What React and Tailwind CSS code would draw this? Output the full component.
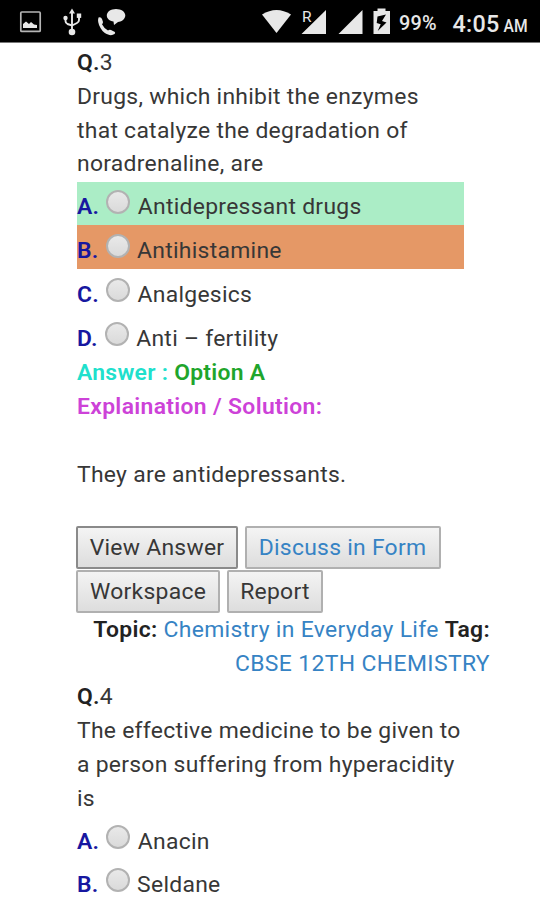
const INK = 'text-[#373737]'

function Line({ children, className = '' }) {
  return <div className={`h-[33.75px] leading-[33.75px] whitespace-pre ${className}`}>{children}</div>
}

function Option({ letter, label, className = '' }) {
  return (
    <div className={`flex h-[43.8px] w-[387px] pt-[8.5px] leading-[34.75px] whitespace-pre ${className}`}>
      <b className="font-semibold text-[#1717a0]">{letter}.</b>
      <span className="ml-[7px] h-[24px] w-[24px] shrink-0 rounded-full border-2 border-[#b2b2b2] bg-linear-to-b from-[#e9e9e9] to-[#dadada]" />
      <span className="ml-[7.5px]">{label}</span>
    </div>
  )
}

function Button({ children, className = '' }) {
  return (
    <button className={`flex h-[43px] shrink-0 justify-center rounded-[2px] border-2 bg-linear-to-b from-[#f4f4f4] to-[#dddddd] leading-[39.5px] whitespace-nowrap ${className}`}>
      {children}
    </button>
  )
}

function StatusBar() {
  return (
    <header className="h-[43px] bg-black border-b border-[#777]">
      <svg width="540" height="42" viewBox="0 0 540 42" fill="#e8e8e8" fontFamily="Roboto, sans-serif">
        <rect x="20.8" y="12" width="19.4" height="19.4" rx="1" fill="none" stroke="#b5b5b5" strokeWidth="1.7" />
        <path d="M23 28v-4l3-2.500 3 2.500 2-2 3 2.500 3 .5v3z" />
        <g fill="none" stroke="#e8e8e8" strokeWidth="1.9">
          <path d="M72 12v20M65.500 18v3q0 2 2 3l4.500 1.500 5-2.500q2-1 2-3v-4" />
        </g>
        <path d="M72 8.500l3 5h-6z" />
        <circle cx="72" cy="32" r="3.300" />
        <circle cx="65.500" cy="18" r="2.200" />
        <rect x="76.800" y="13.500" width="4.400" height="4.400" />
        <path d="M98.500 17.500q2.500-1 3.500 1.500l1 3q0 1.300-1 2.300 2 4.200 6 6.200 1.500-1.300 3-.5l3 1.500q2 1 .5 2.500-2 1.500-5 1-6-1.500-9-7-3.500-6-2-10.500z" />
        <path d="M116 9c5.200 0 9.300 2.800 9.300 6.500S121 22 118 22l-4 3-.5-3.400c-4-.8-6.700-3-6.700-6.100 0-3.700 4-6.500 9.200-6.500z" />
        <path d="M262 14.500q14.500-9 29 0L276.500 33z" />
        <path d="M326 10v24h-24.500zM362.500 10v24h-24z" />
        <text x="302" y="21.500" fontSize="15.500" stroke="#000" strokeWidth="1.500" paintOrder="stroke">R</text>
        <path d="M373.500 11h4V8.500h8V11h4.500v23h-16.500z" />
        <path d="M386 14.500l-8.500 2-.8 6.500 4 1.200-3 6.800 8.800-8.500-4.500-1.500z" fill="#000" />
        <text x="399" y="30" fontSize="20.500" fontWeight="500" textLength="38" lengthAdjust="spacingAndGlyphs">99%</text>
        <text x="452.500" y="31.500" fontSize="24.500" fontWeight="500" textLength="47" lengthAdjust="spacingAndGlyphs">4:05</text>
        <text x="503.500" y="31.500" fontSize="18" fontWeight="500" textLength="24.500" lengthAdjust="spacingAndGlyphs">AM</text>
      </svg>
    </header>
  )
}

export default function App() {
  return (
    <div className={`h-[900px] w-[540px] overflow-hidden bg-white font-[Roboto,sans-serif] text-[22.9px] tracking-[0.28px] ${INK}`}>
      <StatusBar />
      <main className="ml-[77px] w-[413px] pt-[3.1px]">
        <Line><b className="font-semibold text-[#222]">Q.</b>3</Line>
        <Line>Drugs, which inhibit the enzymes</Line>
        <Line>that catalyze the degradation of</Line>
        <Line>noradrenaline, are</Line>
        <div className="mt-[0.6px]">
          <Option letter="A" label="Antidepressant drugs" className="bg-[#abedc6]" />
          <Option letter="B" label="Antihistamine" className="bg-[#e59866]" />
          <Option letter="C" label="Analgesics" />
          <Option letter="D" label="Anti – fertility" />
        </div>
        <Line className="-mt-[0.5px] font-semibold text-[#1fa52c]"><span className="text-[#20e0cc]">Answer :</span> Option A</Line>
        <Line className="font-semibold tracking-[0.33px] text-[#cd42d8]">Explaination / Solution:</Line>
        <Line className="mt-[33.75px]">They are antidepressants.</Line>
        <div className="mt-[34.5px] -ml-[1px] flex gap-[6.5px]">
          <Button className="w-[162px] border-[#8a8a8a]">View Answer</Button>
          <Button className="w-[196px] border-[#b0b0b0] text-[#3683c4]">Discuss in Form</Button>
        </div>
        <div className="mt-[1px] -ml-[1px] flex gap-[7px]">
          <Button className="w-[144px] border-[#b0b0b0]">Workspace</Button>
          <Button className="w-[96px] border-[#b0b0b0]">Report</Button>
        </div>
        <Line className="text-right tracking-[0.32px] text-[#3683c4]"><b className="font-semibold text-[#222]">Topic:</b> Chemistry in Everyday Life <b className="font-semibold text-[#222]">Tag:</b></Line>
        <Line className="text-right tracking-[0.38px] text-[#3683c4]">CBSE 12TH CHEMISTRY</Line>
        <Line><b className="font-semibold text-[#222]">Q.</b>4</Line>
        <Line>The effective medicine to be given to</Line>
        <Line>a person suffering from hyperacidity</Line>
        <Line>is</Line>
        <div className="mt-[0.7px]">
          <Option letter="A" label="Anacin" />
          <Option letter="B" label="Seldane" />
        </div>
      </main>
    </div>
  )
}
